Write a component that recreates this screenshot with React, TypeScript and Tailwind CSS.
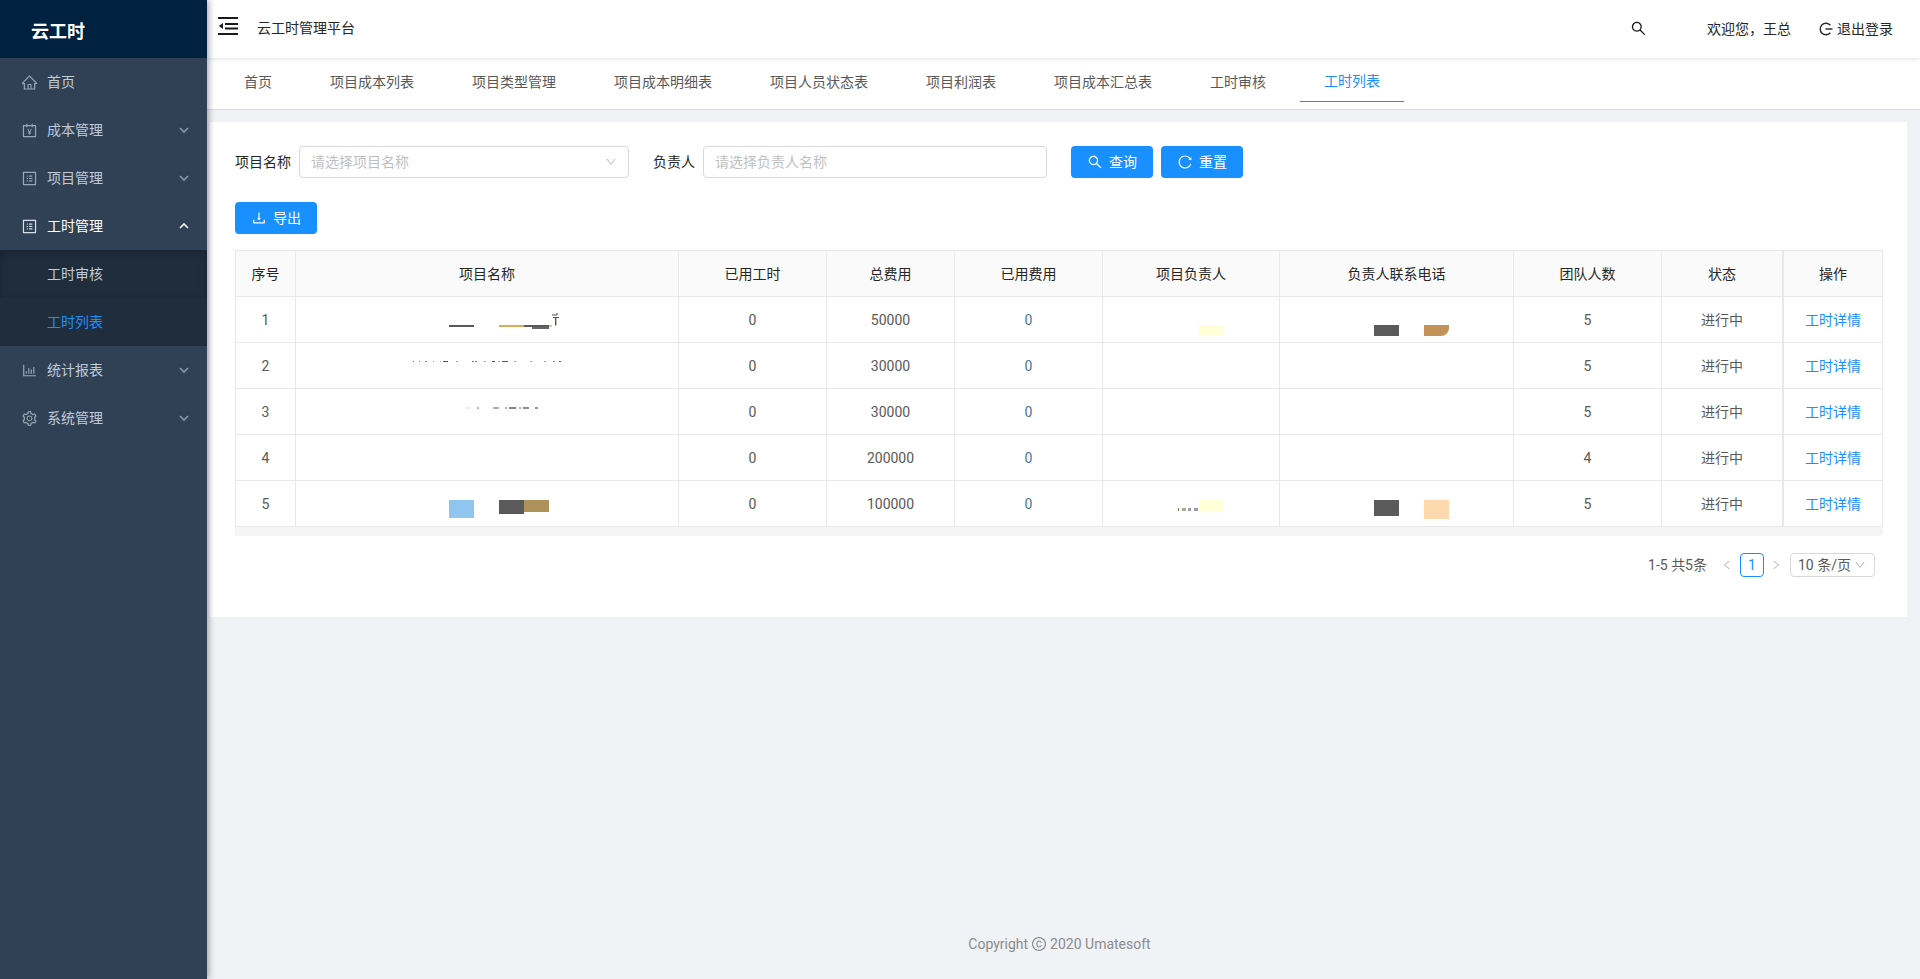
import React from "react";
import {
  AiOutlineHome,
  AiOutlineAccountBook,
  AiOutlineProfile,
  AiOutlineBarChart,
  AiOutlineSetting,
  AiOutlineSearch,
  AiOutlineDownload,
  AiOutlineReload,
  AiOutlineDown,
  AiOutlineLeft,
  AiOutlineRight,
  AiOutlineCopyright,
} from "react-icons/ai";

const Chevron: React.FC<{ up?: boolean }> = ({ up }) => (
  <svg width="10" height="6" viewBox="0 0 10 6" fill="none" className={up ? "rotate-180 text-white" : "text-[#8e9aa9]"}>
    <path d="M1 1l4 4 4-4" stroke="currentColor" strokeWidth="1.6" />
  </svg>
);

const MenuItem: React.FC<{ icon: React.ReactNode; label: string; arrow?: boolean; open?: boolean }> = ({
  icon,
  label,
  arrow,
  open,
}) => (
  <div className={`flex h-[48px] items-center pl-[21px] pr-[18px] ${open ? "text-white" : "text-[#bfcbd9]"}`}>
    <span className={`mr-[9px] ${open ? "text-[#d8dee6]" : "text-[#9aa6b4]"}`}>{icon}</span>
    <span className="flex-1">{label}</span>
    {arrow && <Chevron up={open} />}
  </div>
);

const Sidebar: React.FC = () => (
  <aside className="z-20 flex h-full w-[207px] shrink-0 flex-col bg-[#304156] shadow-[2px_0_6px_rgba(0,21,41,0.35)]">
    <div className="flex h-[58px] items-center bg-[#002140] pt-[5px] pl-[31px] text-[18px] font-bold text-white">云工时</div>
    <MenuItem icon={<AiOutlineHome size={17} />} label="首页" />
    <MenuItem icon={<AiOutlineAccountBook size={17} />} label="成本管理" arrow />
    <MenuItem icon={<AiOutlineProfile size={17} />} label="项目管理" arrow />
    <MenuItem icon={<AiOutlineProfile size={17} />} label="工时管理" arrow open />
    <div className="bg-[#1f2d3d]">
      <div className="flex h-[48px] items-center pl-[47px] text-[#bfcbd9] shadow-[inset_0_3px_8px_rgba(0,0,0,0.22)]">工时审核</div>
      <div className="flex h-[48px] items-center pl-[47px] text-[#1890ff]">工时列表</div>
    </div>
    <MenuItem icon={<AiOutlineBarChart size={17} />} label="统计报表" arrow />
    <MenuItem icon={<AiOutlineSetting size={17} />} label="系统管理" arrow />
  </aside>
);

const Header: React.FC = () => (
  <header className="z-10 flex h-[58px] shrink-0 items-center bg-white pl-[11px] pr-[27px] text-[#262626] shadow-[0_1px_4px_rgba(0,21,41,0.12)]">
    <svg width="20" height="18" viewBox="0 0 20 18" className="mb-[6px] text-[#1a1a1a]" fill="currentColor">
      <rect width="20" height="2" />
      <rect x="7" y="6" width="13" height="2" />
      <rect x="7" y="10.5" width="13" height="2" />
      <rect y="16" width="20" height="2" />
      <path d="M5 6v6L0.8 9z" />
    </svg>
    <span className="mb-[2px] ml-[19px]">云工时管理平台</span>
    <div className="ml-auto flex items-center">
      <AiOutlineSearch size={17} className="mb-[2px] text-[#1a1a1a]" />
      <span className="ml-[60px]">欢迎您，王总</span>
      <span className="ml-[28px] flex items-center">
        <svg width="14" height="14" viewBox="0 0 14 14" fill="none" stroke="currentColor" strokeWidth="1.4">
          <path d="M11.4 3.2A5.8 5.8 0 1 0 11.4 10.8" />
          <path d="M6.5 7H13.5" />
        </svg>
        <span className="ml-[4px]">退出登录</span>
      </span>
    </div>
  </header>
);

const tabs = ["首页", "项目成本列表", "项目类型管理", "项目成本明细表", "项目人员状态表", "项目利润表", "项目成本汇总表", "工时审核", "工时列表"];

const TabBar: React.FC = () => (
  <div className="flex h-[52px] shrink-0 gap-[10px] border-b border-[#d8dce5] bg-white pl-[13px]">
    {tabs.map((t) => (
      <div
        key={t}
        className={`flex h-[44px] items-center px-[24px] pt-[4px] ${
          t === "工时列表" ? "border-b-[1.5px] border-[#1890ff] text-[#1890ff]" : "text-[#595959]"
        }`}
      >
        {t}
      </div>
    ))}
  </div>
);

const BlueButton: React.FC<{ icon: React.ReactNode; label: string }> = ({ icon, label }) => (
  <button className="flex h-[32px] w-[82px] items-center justify-center gap-[6px] rounded-[4px] bg-[#1890ff] text-white">
    {icon}
    {label}
  </button>
);

type Speck = [number, number, string];

const Specks: React.FC<{ width: number; height: number; items: Speck[] }> = ({ width, height, items }) => (
  <svg width={width} height={height} className="block shrink-0">
    {items.map(([x, w, c], i) => (
      <rect key={i} x={x} y={0} width={w} height={height} fill={c} />
    ))}
  </svg>
);

const row2Specks: Speck[] = [
  [0, 1, "#777"], [6, 1, "#8a7a9a"], [12, 2, "#888"], [20, 1, "#b99"], [27, 1, "#aaa"], [30, 5, "#555"], [43, 2, "#c9a06a"],
  [59, 2, "#4a7fc9"], [62, 2, "#4a7fc9"], [71, 2, "#d2a050"], [79, 3, "#334488"], [85, 2, "#d2a050"], [89, 6, "#555"],
  [101, 2, "#b9a070"], [117, 2, "#d2a050"], [131, 2, "#d2a050"], [140, 2, "#5aa0d9"], [146, 2, "#7a4a9a"],
];

const row3Specks: Speck[] = [
  [0, 5, "#eee"], [12, 2, "#8fbfe6"], [28, 6, "#a5a5d0"], [40, 2, "#8fbfe6"], [44, 7, "#888"], [54, 2, "#8fbfe6"], [58, 6, "#889"], [70, 3, "#a68ac0"],
];

const nameCell: Record<number, React.ReactNode> = {
  1: (
    <div className="flex items-start pl-[153px] pt-[28px]">
      <div className="h-[2px] w-[25px] bg-[#5a5a5a]" />
      <div className="ml-[25px] h-[2px] w-[25px] bg-[#d9a956]" />
      <div className="w-[25px]">
        <div className="h-[2px] bg-[#5a5a5a]" />
        <div className="ml-[8px] h-[2px] bg-[#666]" />
      </div>
      <div className="h-[2px] w-[3px] bg-[#e8c684]" />
      <svg width="7" height="13" viewBox="0 0 7 13" className="-mt-[12px] shrink-0 text-[#555]" fill="currentColor">
        <rect x="0" y="1.5" width="5" height="1" />
        <rect x="4" y="0.5" width="2" height="1" />
        <rect x="1" y="4" width="6" height="1" />
        <rect x="3" y="4" width="1.4" height="8.5" />
      </svg>
    </div>
  ),
  2: (
    <div className="pl-[117px] pt-[18px]">
      <Specks width={150} height={1} items={row2Specks} />
    </div>
  ),
  3: (
    <div className="pl-[169px] pt-[18px]">
      <Specks width={75} height={2} items={row3Specks} />
    </div>
  ),
  5: (
    <div className="flex items-start pl-[153px] pt-[19px]">
      <div className="h-[18px] w-[25px] bg-[#90c5ef]" />
      <div className="ml-[25px] h-[14px] w-[25px] bg-[#5a5a5a]" />
      <div className="h-[12px] w-[25px] bg-[#ae905a]" />
    </div>
  ),
};

const managerCell: Record<number, React.ReactNode> = {
  1: (
    <div className="pl-[96px] pt-[28px]">
      <div className="h-[10px] w-[25px] bg-[#ffffd8]" />
    </div>
  ),
  5: (
    <div className="flex items-start pl-[75px] pt-[19px]">
      <div className="mt-[8px] h-[3px] w-[21px]">
        <Specks width={21} height={3} items={[[0, 1, "#776"], [4, 4, "#a9a898"], [10, 3, "#a9a"], [16, 4, "#99a"]]} />
      </div>
      <div className="h-[11px] w-[25px] bg-[#ffffd8]" />
    </div>
  ),
};

const phoneCell: Record<number, React.ReactNode> = {
  1: (
    <div className="flex items-start pl-[94px] pt-[28px]">
      <div className="h-[11px] w-[25px] bg-[#5a5a5a]" />
      <div className="ml-[25px] h-[11px] w-[25px] rounded-br-[8px] bg-[#c29258]" />
    </div>
  ),
  5: (
    <div className="flex items-start pl-[94px] pt-[19px]">
      <div className="h-[16px] w-[25px] bg-[#5a5a5a]" />
      <div className="ml-[25px] h-[19px] w-[25px] bg-[#ffd9ae]" />
    </div>
  ),
};

const rows = [
  { id: 1, total: 50000, team: 5 },
  { id: 2, total: 30000, team: 5 },
  { id: 3, total: 30000, team: 5 },
  { id: 4, total: 200000, team: 4 },
  { id: 5, total: 100000, team: 5 },
];

const columns = ["序号", "项目名称", "已用工时", "总费用", "已用费用", "项目负责人", "负责人联系电话", "团队人数", "状态", "操作"];

const td = "h-[46px] border-b border-r border-[#e8e8e8] p-0 pt-[2px] text-center align-middle";
const tdTop = "h-[46px] border-b border-r border-[#e8e8e8] p-0 align-top";

const DataTable: React.FC = () => (
  <div className="mt-[16px] w-[1648px] border-l border-t border-[#e8e8e8]">
    <table className="w-[1647px] table-fixed border-separate border-spacing-0 text-[#595959]">
      <colgroup>
        <col className="w-[60px]" />
        <col className="w-[383px]" />
        <col className="w-[148px]" />
        <col className="w-[128px]" />
        <col className="w-[148px]" />
        <col className="w-[177px]" />
        <col className="w-[234px]" />
        <col className="w-[148px]" />
        <col className="w-[121px]" />
        <col className="w-[100px]" />
      </colgroup>
      <thead>
        <tr>
          {columns.map((c) => (
            <th
              key={c}
              className={`h-[46px] border-b border-r border-[#e8e8e8] bg-[#fafafa] p-0 pt-[2px] text-center font-normal text-[#262626] ${
                c === "操作" ? "border-l" : ""
              }`}
            >
              {c}
            </th>
          ))}
        </tr>
      </thead>
      <tbody>
        {rows.map((r) => (
          <tr key={r.id}>
            <td className={td}>{r.id}</td>
            <td className={tdTop}>{nameCell[r.id]}</td>
            <td className={td}>0</td>
            <td className={td}>{r.total}</td>
            <td className={`${td} text-[#47769c]`}>0</td>
            <td className={tdTop}>{managerCell[r.id]}</td>
            <td className={tdTop}>{phoneCell[r.id]}</td>
            <td className={td}>{r.team}</td>
            <td className={td}>进行中</td>
            <td className={`${td} border-l text-[#1890ff]`}>工时详情</td>
          </tr>
        ))}
      </tbody>
    </table>
    <div className="-ml-px h-[9px] rounded-b-[4px] bg-[#f5f5f5]" />
  </div>
);

const Pagination: React.FC = () => (
  <div className="mt-[17px] flex h-[24px] w-[1640px] items-center justify-end text-[#595959]">
    <span>1-5 共5条</span>
    <AiOutlineLeft size={12} className="ml-[14px] text-[#bfbfbf]" />
    <span className="ml-[7px] flex h-[24px] w-[24px] items-center justify-center rounded-[4px] border border-[#1890ff] text-[#1890ff]">1</span>
    <AiOutlineRight size={12} className="ml-[6px] text-[#bfbfbf]" />
    <span className="ml-[8px] flex h-[24px] w-[85px] items-center rounded-[4px] border border-[#d9d9d9] pl-[7px]">
      10 条/页
      <AiOutlineDown size={12} className="ml-[3px] text-[#bfbfbf]" />
    </span>
  </div>
);

const App: React.FC = () => (
  <div className="flex h-screen w-full overflow-hidden bg-[#f0f2f5] text-[14px] [font-family:Roboto,'Noto_Sans_CJK_SC',sans-serif]">
    <Sidebar />
    <div className="flex h-full min-w-0 flex-1 flex-col">
      <Header />
      <TabBar />
      <main className="ml-[3px] mr-[13px] mt-[12px] bg-white px-[25px] pb-[40px] pt-[24px]">
        <div className="flex h-[32px] items-center text-[#262626]">
          <span>项目名称</span>
          <div className="ml-[8px] flex h-[32px] w-[330px] items-center justify-between rounded-[4px] border border-[#d9d9d9] pl-[11px] pr-[11px] text-[#bfbfbf]">
            请选择项目名称
            <AiOutlineDown size={12} />
          </div>
          <span className="ml-[24px]">负责人</span>
          <div className="ml-[8px] flex h-[32px] w-[344px] items-center rounded-[4px] border border-[#d9d9d9] pl-[11px] text-[#bfbfbf]">
            请选择负责人名称
          </div>
          <div className="ml-[24px] flex gap-[8px]">
            <BlueButton icon={<AiOutlineSearch size={16} />} label="查询" />
            <BlueButton icon={<AiOutlineReload size={16} />} label="重置" />
          </div>
        </div>
        <div className="mt-[24px]">
          <BlueButton icon={<AiOutlineDownload size={16} />} label="导出" />
        </div>
        <DataTable />
        <Pagination />
      </main>
      <footer className="mt-auto flex items-center justify-center gap-[3px] pb-[24px] pr-[8px] leading-[22px] text-[#8c8c8c]">
        Copyright
        <AiOutlineCopyright size={16} />
        2020 Umatesoft
      </footer>
    </div>
  </div>
);

export default App;
